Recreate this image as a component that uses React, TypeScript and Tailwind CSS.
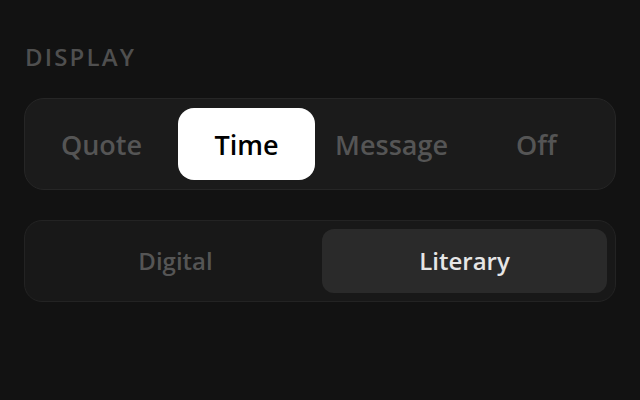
import { useState } from 'react';

const modes = ['Quote', 'Time', 'Message', 'Off'];
const styles = ['Digital', 'Literary'];

export default function App() {
  const [mode, setMode] = useState('Time');
  const [style, setStyle] = useState('Literary');

  return (
    <div
      className="w-[640px] h-[400px] bg-[#121212] px-6 pt-[40px]"
      style={{ fontFamily: '"Open Sans", "Noto Sans", sans-serif' }}
    >
      <div className="text-[24px] leading-[34px] font-semibold tracking-[0.09em] text-[#4f4f4f] pl-px">
        DISPLAY
      </div>

      <div className="mt-[24px] grid grid-cols-4 gap-2 pl-[8px] pr-[10px] py-[9px] rounded-[20px] border border-[#262626] bg-[#1b1b1b]">
        {modes.map((m) => (
          <button
            key={m}
            onClick={() => setMode(m)}
            className={
              m === mode
                ? 'h-[72px] pt-[2px] rounded-[16px] bg-white text-[27px] font-semibold text-black'
                : 'h-[72px] pt-[2px] rounded-[16px] text-[27px] font-semibold text-[#555555]'
            }
          >
            {m}
          </button>
        ))}
      </div>

      <div className="mt-[30px] grid grid-cols-2 gap-1 p-2 rounded-[18px] border border-[#232323] bg-[#181818]">
        {styles.map((s) => (
          <button
            key={s}
            onClick={() => setStyle(s)}
            className={
              s === style
                ? 'h-[64px] rounded-[12px] bg-[#2a2a2a] text-[24px] font-semibold text-[#e6e6e6]'
                : 'h-[64px] rounded-[12px] text-[24px] font-semibold text-[#555555]'
            }
          >
            {s}
          </button>
        ))}
      </div>
    </div>
  );
}
